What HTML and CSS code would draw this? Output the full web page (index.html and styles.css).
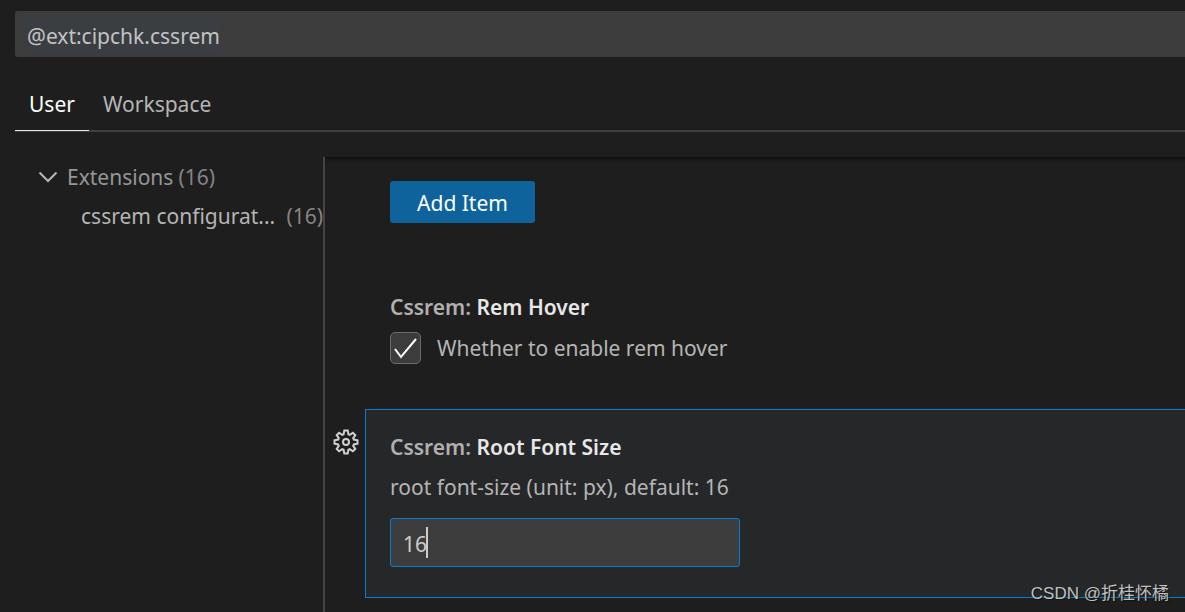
FILE: index.html
```html
<!DOCTYPE html>
<html lang="en">
<head>
<meta charset="utf-8">
<title>Settings</title>
<link rel="stylesheet" href="styles.css">
</head>
<body>
<div class="settings">
  <header class="header">
    <input class="search" type="text" aria-label="Search settings" value="@ext:cipchk.cssrem">
    <nav class="tabs" role="tablist">
      <button class="tab tab-active" role="tab" aria-selected="true">User</button>
      <button class="tab" role="tab" aria-selected="false">Workspace</button>
    </nav>
  </header>
  <div class="body">
    <aside class="toc">
      <div class="toc-row toc-parent">
        <svg class="chevron" viewBox="0 0 20 20" aria-hidden="true"><path d="M1.500 5.500l8.500 8.500 8.500-8.500"/></svg>
        <span class="toc-label">Extensions</span>
        <span class="count">(16)</span>
      </div>
      <div class="toc-row toc-child">
        <span class="toc-label">cssrem configurat...</span>
        <span class="count">(16)</span>
      </div>
    </aside>
    <main class="list">
      <section class="setting setting-add">
        <button class="add">Add Item</button>
      </section>
      <section class="setting">
        <h2 class="title"><span class="category">Cssrem:</span> Rem Hover</h2>
        <div class="check-row">
          <input class="check" type="checkbox" id="hover" checked>
          <svg class="tick" viewBox="0 0 31 31" aria-hidden="true"><path d="M5 16l6 8L26 6"/></svg>
          <label for="hover">Whether to enable rem hover</label>
        </div>
      </section>
      <div class="focused-row">
        <button class="gear" aria-label="More actions">
          <svg viewBox="0 0 26 26" aria-hidden="true"><path d="M10.600 5.200L11.300 1.500h3.400l.7 3.700 1.400.6 3.100-2.100 2.400 2.400-2.100 3.100.6 1.400 3.700.7v3.400l-3.700.7-.6 1.400 2.100 3.100-2.400 2.400-3.100-2.100-1.400.6-.7 3.700h-3.400l-.7-3.700-1.400-.6-3.100 2.100-2.400-2.400 2.100-3.100-.6-1.400-3.700-.7v-3.400l3.700-.7.6-1.400-2.100-3.100 2.400-2.400 3.100 2.100z"/><circle cx="13" cy="13" r="3"/></svg>
        </button>
        <section class="setting focused">
          <h2 class="title"><span class="category">Cssrem:</span> Root Font Size</h2>
          <label class="description" for="root-size">root font-size (unit: px), default: 16</label>
          <div class="field">
            <input class="number" id="root-size" type="text" value="16">
            <span class="caret"></span>
          </div>
        </section>
      </div>
    </main>
  </div>
  <div class="watermark">CSDN @折桂怀橘</div>
</div>
</body>
</html>
```
FILE: styles.css
```css
* { box-sizing: border-box; }
body {
  margin: 0;
  background: #1e1e1e;
  color: #b5b5b5;
  font: 21px/30px "Noto Sans", "Open Sans", sans-serif;
  overflow: hidden;
}
button, input { font: inherit; color: inherit; margin: 0; }
.settings {
  position: relative;
  display: flex;
  flex-direction: column;
  height: 100vh;
}
.header { padding: 11px 0 0 15px; }
.search {
  display: block;
  width: 100%;
  height: 46px;
  padding: 4px 12px 0;
  border: 0;
  border-radius: 3px 0 0 3px;
  background: linear-gradient(#3a3d41, #3a3d41) 12px 7px / 194px 34px no-repeat #3c3c3c;
  color: #c3c3c3;
}
.tabs {
  display: flex;
  margin-top: 20px;
  height: 55px;
  border-bottom: 2px solid #404040;
}
.tab {
  height: 54px;
  padding: 0 14px;
  border: 0;
  border-bottom: 1px solid transparent;
  background: none;
}
.tab-active {
  border-bottom-color: #e7e7e7;
  color: #fff;
}
.body {
  display: flex;
  flex: 1;
  min-height: 0;
  margin-top: 25px;
}
.toc {
  flex: none;
  width: 325px;
  border-right: 2px solid #444;
  white-space: nowrap;
}
.toc-row {
  display: flex;
  align-items: center;
  height: 39px;
}
.toc-parent { gap: 5px; padding-left: 38px; color: #969696; }
.toc-child { justify-content: space-between; padding-left: 81px; }
.chevron {
  width: 20px;
  height: 20px;
  margin-right: 4px;
  fill: none;
  stroke: #b5b5b5;
  stroke-width: 2;
}
.count { color: #858585; }
.list {
  flex: 1;
  min-width: 0;
  box-shadow: inset 0 6px 6px -6px #000;
}
.setting { padding: 0 24px 0 65px; }
.setting-add { padding-top: 24px; padding-bottom: 69px; }
.add {
  display: block;
  height: 42px;
  min-width: 145px;
  padding: 2px 24px 0;
  border: 0;
  border-radius: 3px;
  background: #0e639c;
  color: #fff;
}
.title {
  margin: 0;
  font-size: 21px;
  font-weight: 600;
  color: #e7e7e7;
}
.category { color: #b0b0b0; }
.check-row {
  display: grid;
  grid-template-columns: 31px 1fr;
  column-gap: 16px;
  align-items: center;
  margin-top: 10px;
}
.check {
  grid-area: 1 / 1;
  width: 31px;
  height: 32px;
  appearance: none;
  border: 1px solid #6b6b6b;
  border-radius: 5px;
  background: #3c3c3c;
}
.tick {
  grid-area: 1 / 1;
  width: 31px;
  height: 31px;
  fill: none;
  stroke: #fff;
  stroke-width: 2;
  pointer-events: none;
}
.check:not(:checked) + .tick { visibility: hidden; }
.focused-row {
  display: flex;
  align-items: flex-start;
  margin-top: 45px;
}
.gear {
  flex: none;
  width: 26px;
  height: 26px;
  margin: 20px 6px 0 8px;
  padding: 0;
  border: 0;
  background: none;
}
.gear svg {
  display: block;
  fill: none;
  stroke: #d0d0d0;
  stroke-width: 2;
}
.focused {
  flex: 1;
  padding: 22px 24px 30px;
  border: 1px solid #007fd4;
  border-right: 0;
  background: #262729;
}
.description { display: block; margin-top: 10px; }
.field {
  position: relative;
  max-width: 350px;
  margin-top: 16px;
}
.number {
  display: block;
  width: 100%;
  height: 49px;
  padding: 2px 12px 0;
  border: 1px solid #007fd4;
  border-radius: 3px;
  outline: 0;
  background: #3c3c3c;
  color: #ccc;
}
.caret {
  position: absolute;
  top: 9px;
  left: 36px;
  width: 2px;
  height: 31px;
  background: #ccc;
}
.watermark {
  position: absolute;
  right: 16px;
  bottom: 6px;
  font: 17px/24px "Liberation Sans", "Noto Sans CJK SC", sans-serif;
  color: #c0c0c0;
  text-shadow: 1px 1px 1px #111;
}
```
